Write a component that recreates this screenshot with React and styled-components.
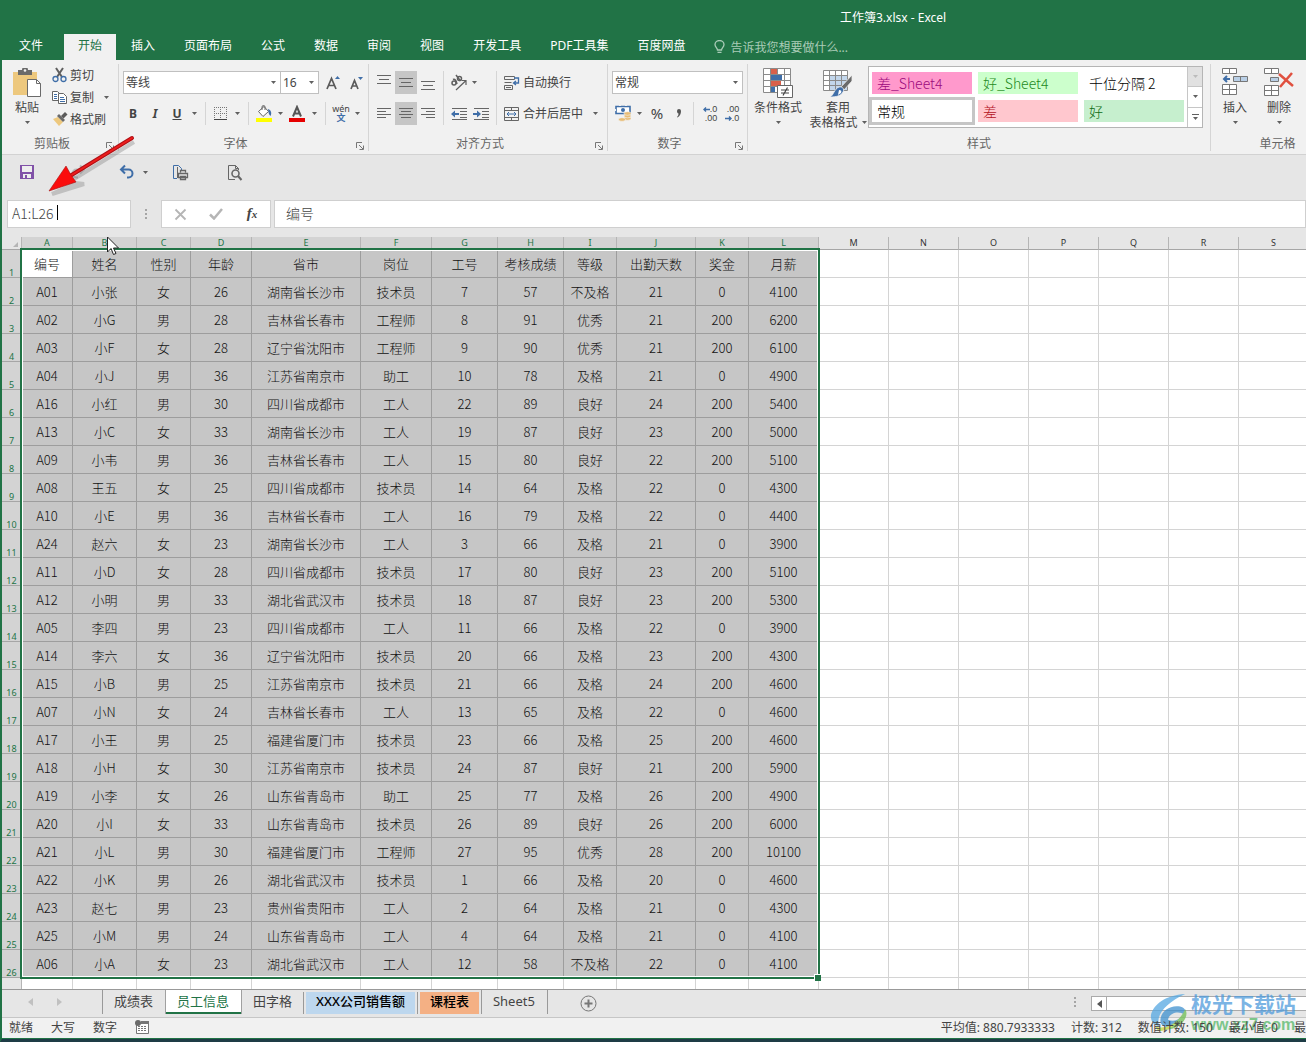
import React, { useState } from 'react';
import styled, { createGlobalStyle, css } from 'styled-components';

const TABS = [
  '文件',
  '开始',
  '插入',
  '页面布局',
  '公式',
  '数据',
  '审阅',
  '视图',
  '开发工具',
  'PDF工具集',
  '百度网盘',
];

const COLUMNS = [
  ['A', 51],
  ['B', 64],
  ['C', 54],
  ['D', 61],
  ['E', 109],
  ['F', 71],
  ['G', 66],
  ['H', 66],
  ['I', 53],
  ['J', 79],
  ['K', 53],
  ['L', 70],
  ...'MNOPQRS'.split('').map(letter => [letter, 70]),
];

const ROWS = `编号,姓名,性别,年龄,省市,岗位,工号,考核成绩,等级,出勤天数,奖金,月薪
A01,小张,女,26,湖南省长沙市,技术员,7,57,不及格,21,0,4100
A02,小G,男,28,吉林省长春市,工程师,8,91,优秀,21,200,6200
A03,小F,女,28,辽宁省沈阳市,工程师,9,90,优秀,21,200,6100
A04,小J,男,36,江苏省南京市,助工,10,78,及格,21,0,4900
A16,小红,男,30,四川省成都市,工人,22,89,良好,24,200,5400
A13,小C,女,33,湖南省长沙市,工人,19,87,良好,23,200,5000
A09,小韦,男,36,吉林省长春市,工人,15,80,良好,22,200,5100
A08,王五,女,25,四川省成都市,技术员,14,64,及格,22,0,4300
A10,小E,男,36,吉林省长春市,工人,16,79,及格,22,0,4400
A24,赵六,女,23,湖南省长沙市,工人,3,66,及格,21,0,3900
A11,小D,女,28,四川省成都市,技术员,17,80,良好,23,200,5100
A12,小明,男,33,湖北省武汉市,技术员,18,87,良好,23,200,5300
A05,李四,男,23,四川省成都市,工人,11,66,及格,22,0,3900
A14,李六,女,36,辽宁省沈阳市,技术员,20,66,及格,23,200,4300
A15,小B,男,25,江苏省南京市,技术员,21,66,及格,24,200,4600
A07,小N,女,24,吉林省长春市,工人,13,65,及格,22,0,4600
A17,小王,男,25,福建省厦门市,技术员,23,66,及格,25,200,4600
A18,小H,女,30,江苏省南京市,技术员,24,87,良好,21,200,5900
A19,小李,女,26,山东省青岛市,助工,25,77,及格,26,200,4900
A20,小I,女,33,山东省青岛市,技术员,26,89,良好,26,200,6000
A21,小L,男,30,福建省厦门市,工程师,27,95,优秀,28,200,10100
A22,小K,男,26,湖北省武汉市,技术员,1,66,及格,20,0,4600
A23,赵七,男,23,贵州省贵阳市,工人,2,64,及格,21,0,4300
A25,小M,男,24,山东省青岛市,工人,4,64,及格,21,0,4100
A06,小A,女,23,湖北省武汉市,工人,12,58,不及格,22,0,4100`
  .split('\n')
  .map(line => line.split(','));

const SELECTED_COLS = 12;
const SELECTED_ROWS = ROWS.length;
const ROW_HEAD = 20;
const COL_HEAD = 13;
const ROW_HEIGHT = 28;
const TABLE_WIDTH = COLUMNS.reduce((sum, col) => sum + col[1], ROW_HEAD);
const SELECTION_WIDTH = COLUMNS.slice(0, SELECTED_COLS).reduce(
  (sum, col) => sum + col[1],
  0
);

/* ---------- icons ---------- */

const Caret = ({ faint }) => (
  <svg width="5" height="3" viewBox="0 0 5 3" fill={faint ? '#bbb' : '#606060'}>
    <path d="M0 0h5L2.5 3z" />
  </svg>
);

const PasteIcon = () => (
  <svg width="30" height="30" viewBox="0 0 30 30">
    <path d="M1 4h24v23H1z" fill="#edc87e" />
    <path d="M6 2h4a3 3 0 0 1 6 0h4v5H6z" fill="#6a6a6a" />
    <circle cx="13" cy="2.5" r="1.3" fill="#f1f1f1" />
    <path d="M15.5 11.5h9l4 4v13h-13z" fill="#fff" stroke="#6a6a6a" />
    <path d="M24.500 11.500v4h4" fill="none" stroke="#6a6a6a" />
  </svg>
);

const CutIcon = () => (
  <svg width="16" height="16" viewBox="0 0 16 16" fill="none">
    <path d="M4 1l6 9M11 1L5 10" stroke="#5f5f5f" strokeWidth="2" />
    <circle cx="3.500" cy="12" r="2.500" stroke="#3f6ea8" strokeWidth="1.300" />
    <circle cx="11.500" cy="12" r="2.500" stroke="#3f6ea8" strokeWidth="1.300" />
  </svg>
);

const CopyIcon = () => (
  <svg width="16" height="16" viewBox="0 0 16 16" fill="#fff" stroke="#666">
    <path d="M.5 2.500h5l2 2v7h-7z" />
    <path d="M6.500 4.500h5l3 3v7h-8z" />
    <path d="M2 5.500h3M2 7.500h3M2 9.500h3M8 8.500h4M8 10.500h5M8 12.500h5" stroke="#3f6ea8" />
  </svg>
);

const BrushIcon = () => (
  <svg width="16" height="16" viewBox="0 0 16 16">
    <path d="M1 8l5-2 5 5-4 4z" fill="#edc87e" />
    <path d="M5 5l2-2 6 6-2 2z" fill="#6a6a6a" />
    <path d="M9 5l4-4 2.500 2.500-4 4z" fill="#5b5b5b" />
  </svg>
);

const LauncherIcon = () => (
  <svg width="8" height="8" viewBox="0 0 8 8" fill="none" stroke="#777">
    <path d="M.5 6V.5H6M3 3l4 4M7.500 3.500v4h-4" />
  </svg>
);

const FontSizeIcon = ({ down }) => (
  <svg width="15" height="18" viewBox="0 0 15 18" fill="none">
    <path
      d={down ? 'M2 15L5.500 6.500 9 15M3.500 12h4.500' : 'M1 15L5.500 4.500 10 15M2.500 11.500h6'}
      stroke="#5a5a5a"
      strokeWidth="1.700"
    />
    <path d={down ? 'M9 3h5l-2.500 3z' : 'M9 5h5l-2.500-3z'} fill="#3f6ea8" />
  </svg>
);

const BordersIcon = () => (
  <svg width="14" height="14" viewBox="0 0 14 14" fill="none" stroke="#777">
    <path d="M0 .5h14M0 6.500h14M.5 0v13M6.500 0v13M12.500 0v13" strokeDasharray="1 1" />
    <path d="M0 12.500h13" stroke="#444" />
  </svg>
);

const FillIcon = () => (
  <svg width="17" height="17" viewBox="0 0 17 17">
    <path d="M2.500 6.500L8 1.500l4.500 5-5.500 5z" fill="#fff" stroke="#666" />
    <path d="M6 5V2a1.500 1.500 0 0 1 3 0v3" fill="none" stroke="#666" />
    <path d="M12 4c3 1 4 4 2.500 7-1.500-1-2-3-2.500-7z" fill="#3f6ea8" />
    <path d="M0 13h16v4H0z" fill="#ffff00" />
  </svg>
);

const FontColorIcon = () => (
  <svg width="16" height="17" viewBox="0 0 16 17">
    <path d="M4 11.500L8 2l4 9.500M5.500 8.500h5" fill="none" stroke="#555" strokeWidth="2" />
    <path d="M0 13h16v4H0z" fill="#e60000" />
  </svg>
);

const LINE_SETS = {
  top: [[0, 14, 0], [2, 12, 4], [0, 14, 8]],
  middle: [[0, 14, 3], [2, 12, 7], [0, 14, 11]],
  bottom: [[0, 14, 6], [2, 12, 10], [0, 14, 14]],
  left: [[0, 14, 2], [0, 9, 5], [0, 14, 8], [0, 9, 11]],
  center: [[0, 14, 2], [2, 12, 5], [0, 14, 8], [2, 12, 11]],
  right: [[0, 14, 2], [5, 14, 5], [0, 14, 8], [5, 14, 11]],
};

const LinesIcon = ({ type }) => (
  <svg width="14" height="15" viewBox="0 0 14 15">
    {LINE_SETS[type].map(([from, to, y]) => (
      <rect key={y} x={from} y={y} width={to - from} height="1" fill="#666" />
    ))}
  </svg>
);

const OrientationIcon = () => (
  <svg width="18" height="18" viewBox="0 0 18 18" fill="none" stroke="#5f5f5f">
    <circle cx="4" cy="9" r="2" strokeWidth="1.500" />
    <path d="M3 5.500c2-1 3 1 4 4.500M6 1l4.500 6" strokeWidth="1.500" />
    <circle cx="9.500" cy="4.500" r="2" strokeWidth="1.500" />
    <path d="M6 16l9.500-9M11.500 6.500h4.500V11" strokeWidth="1.200" />
  </svg>
);

const IndentIcon = ({ right }) => (
  <svg width="17" height="14" viewBox="0 0 17 14">
    <path d="M1 1.500h15M9 4.500h7M9 7.500h7M9 10.500h7M1 12.500h15" stroke="#666" fill="none" />
    <path
      d={right ? 'M0 6h4V3.500L8 7l-4 3.500V8H0z' : 'M8 6H4V3.500L0 7l4 3.500V8h4z'}
      fill="#3f6ea8"
    />
  </svg>
);

const WrapIcon = () => (
  <svg width="16" height="16" viewBox="0 0 16 16" fill="none" stroke="#666">
    <path d="M.5 1.500h10v3H.5zM.5 7.500h7M.5 10.500h8v4h-8zM2 12.500h5" />
    <path d="M10 3h4.500v5H10M12 6l-2.500 2 2.500 2" stroke="#3f6ea8" strokeWidth="1.300" />
  </svg>
);

const MergeIcon = () => (
  <svg width="16" height="16" viewBox="0 0 16 16" fill="none" stroke="#666">
    <path d="M.5 1.500h14v13H.5zM.5 4.500h14M.5 11.500h14M7.500 1v3M7.500 12v3" />
    <path d="M3 8h9M5 6L3 8l2 2M10 6l2 2-2 2" stroke="#3f6ea8" />
  </svg>
);

const CurrencyIcon = () => (
  <svg width="17" height="17" viewBox="0 0 17 17">
    <path d="M1 1.500h14v7H1z" fill="#fff" stroke="#3f6ea8" strokeWidth="1.600" />
    <path d="M4 .5h2M10 .5h2M.5 4v2" stroke="#f1f1f1" strokeWidth="1" />
    <circle cx="8" cy="5" r="2" fill="#3f6ea8" />
    <g fill="#e9bd76" stroke="#f1f1f1" strokeWidth=".6">
      <ellipse cx="12.500" cy="13.500" rx="3.500" ry="1.800" />
      <ellipse cx="12.500" cy="11" rx="3.500" ry="1.800" />
      <ellipse cx="12.500" cy="8.500" rx="3.500" ry="1.800" />
      <ellipse cx="7" cy="14.500" rx="3.500" ry="1.800" />
    </g>
  </svg>
);

const CommaIcon = () => (
  <svg width="6" height="9" viewBox="0 0 6 9" fill="#555">
    <path d="M1 2a2 2 0 0 1 4 0c0 3-1 5-3.500 6.500L1 8c1-1 1.500-2 1.500-3.500C1.500 4.500 1 3 1 2z" />
  </svg>
);

const DecimalArrow = ({ right }) => (
  <svg width="7" height="5" viewBox="0 0 7 5" fill="none" stroke="#3f6ea8" strokeWidth="1.400">
    <path d={right ? 'M0 2.500h6M4 .5l2 2-2 2' : 'M7 2.500H1M3 .5l-2 2 2 2'} />
  </svg>
);

const ConditionalIcon = () => (
  <svg width="30" height="30" viewBox="0 0 30 30">
    <path
      d="M.5.5h27v24H.5zM7.500.5v24M14.500.5v24M21.500.5v24M.5 6.500h27M.5 12.500h27M.5 18.500h27"
      fill="#fff"
      stroke="#8a8a8a"
    />
    <path d="M8 1h6v5H8zM8 13h10v5H8z" fill="#d9604a" />
    <path d="M8 7h11v5H8zM8 19h4v5H8z" fill="#3f6ea8" />
    <path d="M14.500 17.500h15v12h-15z" fill="#fff" stroke="#666" />
    <path d="M18 22h8M18 25h8M24.500 19.500l-4.500 8" stroke="#444" fill="none" strokeWidth="1.200" />
  </svg>
);

const FormatTableIcon = () => (
  <svg width="30" height="30" viewBox="0 0 30 30">
    <path d="M.5 2.500h24v20H.5z" fill="#fff" />
    <path d="M7 8h18v14H7z" fill="#c3d7ec" />
    <path
      d="M.5 2.500h24v20H.5zM6.500 2.500v20M12.500 2.500v20M18.500 2.500v20M.5 7.500h24M.5 12.500h24M.5 17.500h24"
      fill="none"
      stroke="#8a8a8a"
    />
    <path d="M29 7v6l-8 9-3-3z" fill="#6a6a6a" stroke="#f1f1f1" strokeWidth=".8" />
    <path
      d="M16 19c3-1 6 2 4 5-2 4-7 5-13 5 4-2 4-8 9-10z"
      fill="#3f6ea8"
      stroke="#f1f1f1"
      strokeWidth=".8"
    />
    <path d="M16 22c2 0 3 1 2 3l-3 2z" fill="#fff" />
  </svg>
);

const InsertCellsIcon = () => (
  <svg width="26" height="30" viewBox="0 0 26 30" fill="#fff" stroke="#777">
    <path d="M.5.5h14v5H.5zM7.500.5v5M.5 16.500h14v10H.5zM7.500 16.500v10M.5 21.500h14" />
    <path d="M11.500 8.500h14v5h-14zM18.500 8.500v5" fill="#b9cfe6" />
    <path d="M8 11H3M5 8l-3 3 3 3" fill="none" stroke="#3f6ea8" strokeWidth="2" />
  </svg>
);

const DeleteCellsIcon = () => (
  <svg width="30" height="30" viewBox="0 0 30 30" fill="#fff" stroke="#777">
    <path d="M.5.5h14v5H.5zM7.500.5v5M.5 17.500h14v10H.5zM7.500 17.500v10M.5 22.500h14" />
    <path d="M6.500 9.500h8v4h-8z" fill="#b9cfe6" />
    <path d="M15 6l14 12M28 5L16 19" stroke="#e0503f" strokeWidth="2.500" />
  </svg>
);

const BulbIcon = () => (
  <svg width="11" height="14" viewBox="0 0 11 14" fill="none" stroke="#a9cbb7" strokeWidth="1.300">
    <path d="M3.500 10c0-2-2.500-3-2.500-5.500a4.500 4 0 0 1 9 0C10 7 7.500 8 7.500 10zM3.500 12.300h4" />
  </svg>
);

const SaveIcon = () => (
  <svg width="16" height="16" viewBox="0 0 16 16">
    <path d="M1 1h14v14H1z" fill="#8152a8" />
    <path d="M3 2h10v6H3zM4 10h8v4H4z" fill="#eee" />
    <path d="M6 11h2v3H6z" fill="#8152a8" />
  </svg>
);

const UndoIcon = ({ faint }) => (
  <svg
    width="16"
    height="16"
    viewBox="0 0 16 16"
    fill="none"
    stroke={faint ? '#b9b9b9' : '#3f6ea8'}
    strokeWidth="2"
  >
    {faint ? (
      <path d="M10 1.500l4 4-4 4M14 5.500H6.500a4 4 0 0 0 0 8H8" />
    ) : (
      <path d="M6 1.500L2 5.500l4 4M2 5.500h7.500a4 4 0 0 1 0 8H8" />
    )}
  </svg>
);

const PrintIcon = () => (
  <svg width="17" height="17" viewBox="0 0 17 17" fill="none" stroke="#666">
    <path d="M5 14.500H1.500v-13h5l3 3V6" stroke="#3f6ea8" />
    <path d="M5.500 3v11" />
    <path d="M8.500 8.500v-2h5v2M6.500 9.500h9v4h-9zM8.500 12.500h5v3h-5z" fill="#e6e6e6" strokeWidth="1.300" />
  </svg>
);

const PreviewIcon = () => (
  <svg width="17" height="17" viewBox="0 0 17 17" fill="none" stroke="#666">
    <path d="M9 15.500H2.500v-14h7l3 3V6M9.500 1.500v3h3" />
    <circle cx="9.500" cy="9.500" r="3.500" strokeWidth="1.600" />
    <path d="M12 12l3.500 4" strokeWidth="2" />
  </svg>
);

const CancelIcon = () => (
  <svg width="13" height="13" viewBox="0 0 13 13" fill="none" stroke="#b5b5b5" strokeWidth="1.800">
    <path d="M1.500 1.500l10 10M11.500 1.500l-10 10" />
  </svg>
);

const CheckIcon = () => (
  <svg width="14" height="12" viewBox="0 0 14 12" fill="none" stroke="#b5b5b5" strokeWidth="2.500">
    <path d="M1 6.500l4 4L13 1" />
  </svg>
);

const DotsIcon = () => (
  <svg width="3" height="12" viewBox="0 0 3 12" fill="#a5a5a5">
    <path d="M0 1h2v2H0zM0 5h2v2H0zM0 9h2v2H0z" />
  </svg>
);

const SideArrow = ({ right, dark }) => (
  <svg width="5" height="8" viewBox="0 0 5 8" fill={dark ? '#555' : '#c0c0c0'}>
    <path d={right ? 'M0 0l5 4-5 4z' : 'M5 0L0 4l5 4z'} />
  </svg>
);

const PlusIcon = () => (
  <svg width="17" height="17" viewBox="0 0 17 17" fill="none" stroke="#777">
    <circle cx="8.500" cy="8.500" r="7.500" />
    <path d="M8.500 4.500v8M4.500 8.500h8" strokeWidth="2" />
  </svg>
);

const MacroIcon = () => (
  <svg width="14" height="14" viewBox="0 0 14 14">
    <path d="M1.500 5v8.500h12V3" fill="#fff" stroke="#777" />
    <path d="M6 1h8v3H6z" fill="#777" />
    <path d="M3 6.500h9M3 8.500h9M3 10.500h9" stroke="#777" strokeDasharray="2 1" />
    <circle cx="3" cy="3" r="3" fill="#6a6a6a" />
  </svg>
);

/* ---------- app ---------- */

const Launcher = () => (
  <LauncherButton aria-label="更多设置">
    <LauncherIcon />
  </LauncherButton>
);

const RibbonGroup = ({ width, label, launcher, children }) => (
  <Group $width={width}>
    <GroupBody>{children}</GroupBody>
    <GroupFooter>
      <GroupName>{label}</GroupName>
      {launcher && <Launcher />}
    </GroupFooter>
  </Group>
);

const DropButton = ({ width = 12, label = '展开' }) => (
  <Tool $width={width} aria-label={label}>
    <Caret />
  </Tool>
);

const Combo = ({ label, value, width }) => (
  <ComboBox $width={width}>
    <ComboSelect aria-label={label} defaultValue={value}>
      <option>{value}</option>
    </ComboSelect>
    <ComboArrow>
      <Caret />
    </ComboArrow>
  </ComboBox>
);

const Ribbon = () => (
  <RibbonBar>
    <RibbonGroup width={117} label="剪贴板" launcher>
      <BigTool $width={50}>
        <PasteIcon />
        <span>粘贴</span>
        <BigLine>
          <Caret />
        </BigLine>
      </BigTool>
      <SmallStack>
        <SmallTool>
          <CutIcon />
          剪切
        </SmallTool>
        <SmallTool>
          <CopyIcon />
          复制
          <TrailingCaret>
            <Caret />
          </TrailingCaret>
        </SmallTool>
        <SmallTool>
          <BrushIcon />
          格式刷
        </SmallTool>
      </SmallStack>
    </RibbonGroup>

    <RibbonGroup width={250} label="字体" launcher>
      <Rows $left={3}>
        <ToolRow $left={1}>
          <Combo label="字体" value="等线" width={158} />
          <Combo label="字号" value="16" width={39} />
          <Tool $width={28} aria-label="增大字号">
            <FontSizeIcon />
          </Tool>
          <Tool $width={18} aria-label="减小字号">
            <FontSizeIcon down />
          </Tool>
        </ToolRow>
        <ToolRow>
          <Tool $width={22} $bold>
            B
          </Tool>
          <Tool $width={22} $bold $italic>
            I
          </Tool>
          <Tool $width={22} $bold>
            <u>U</u>
          </Tool>
          <DropButton />
          <Divider $gap={5} />
          <Tool $width={20} aria-label="边框">
            <BordersIcon />
          </Tool>
          <DropButton />
          <Divider $gap={5} />
          <Tool $width={20} aria-label="填充颜色">
            <FillIcon />
          </Tool>
          <DropButton />
          <Tool $width={22} aria-label="字体颜色">
            <FontColorIcon />
          </Tool>
          <DropButton />
          <Divider $gap={5} />
          <Tool $width={20}>
            <Phonetic>
              wén<b>文</b>
            </Phonetic>
          </Tool>
          <DropButton />
        </ToolRow>
      </Rows>
    </RibbonGroup>

    <RibbonGroup width={239} label="对齐方式" launcher>
      <Rows $left={4}>
        <ToolRow>
          {['top', 'middle', 'bottom'].map(type => (
            <Tool key={type} $width={22} $active={type === 'middle'} aria-label={type}>
              <LinesIcon type={type} />
            </Tool>
          ))}
        </ToolRow>
        <ToolRow>
          {['left', 'center', 'right'].map(type => (
            <Tool key={type} $width={22} $active={type === 'center'} aria-label={type}>
              <LinesIcon type={type} />
            </Tool>
          ))}
        </ToolRow>
      </Rows>
      <TallDivider />
      <Rows>
        <ToolRow>
          <Tool $width={22} aria-label="方向">
            <OrientationIcon />
          </Tool>
          <DropButton width={8} />
        </ToolRow>
        <ToolRow>
          <Tool $width={22} aria-label="减少缩进量">
            <IndentIcon />
          </Tool>
          <Tool $width={22} aria-label="增加缩进量">
            <IndentIcon right />
          </Tool>
        </ToolRow>
      </Rows>
      <TallDivider />
      <Rows $left={3}>
        <TextTool>
          <WrapIcon />
          自动换行
        </TextTool>
        <ToolRow>
          <TextTool>
            <MergeIcon />
            合并后居中
          </TextTool>
          <DropButton width={24} />
        </ToolRow>
      </Rows>
    </RibbonGroup>

    <RibbonGroup width={140} label="数字" launcher>
      <Rows $left={4}>
        <Combo label="数字格式" value="常规" width={131} />
        <ToolRow>
          <Tool $width={22} aria-label="会计数字格式">
            <CurrencyIcon />
          </Tool>
          <DropButton width={10} />
          <Tool $width={26} $size={15}>
            %
          </Tool>
          <Tool $width={18} aria-label="千位分隔样式">
            <CommaIcon />
          </Tool>
          <Divider $gap={5} />
          <Tool $width={22}>
            <Decimal>
              <span>
                <DecimalArrow />
                .0
              </span>
              <span>.00</span>
            </Decimal>
          </Tool>
          <Tool $width={22}>
            <Decimal>
              <span>.00</span>
              <span>
                <DecimalArrow right />
                .0
              </span>
            </Decimal>
          </Tool>
        </ToolRow>
      </Rows>
    </RibbonGroup>

    <RibbonGroup width={463} label="样式">
      <BigTool $width={60}>
        <ConditionalIcon />
        <span>条件格式</span>
        <BigLine>
          <Caret />
        </BigLine>
      </BigTool>
      <BigTool $width={60}>
        <FormatTableIcon />
        <span>套用</span>
        <BigLine>
          表格格式
          <Caret />
        </BigLine>
      </BigTool>
      <Gallery>
        <Swatches>
          <Swatch $bg="#ff99cc" $color="#9c0a7c">
            差_Sheet4
          </Swatch>
          <Swatch $bg="#ccffcc" $color="#1d8a1d">
            好_Sheet4
          </Swatch>
          <Swatch $bg="#fff" $color="#000">
            千位分隔 2
          </Swatch>
          <Swatch $bg="#fff" $color="#000" $selected>
            常规
          </Swatch>
          <Swatch $bg="#ffc7ce" $color="#b3121d">
            差
          </Swatch>
          <Swatch $bg="#c6efce" $color="#0d6b14">
            好
          </Swatch>
        </Swatches>
        <GalleryScroll>
          <ScrollStep $off aria-label="上一行">
            <Caret faint />
          </ScrollStep>
          <ScrollStep aria-label="下一行">
            <Caret />
          </ScrollStep>
          <ScrollStep aria-label="其他">
            <MoreMark />
            <Caret />
          </ScrollStep>
        </GalleryScroll>
      </Gallery>
    </RibbonGroup>

    <RibbonGroup width={134} label="单元格">
      <BigTool $width={48}>
        <InsertCellsIcon />
        <span>插入</span>
        <BigLine>
          <Caret />
        </BigLine>
      </BigTool>
      <BigTool $width={40}>
        <DeleteCellsIcon />
        <span>删除</span>
        <BigLine>
          <Caret />
        </BigLine>
      </BigTool>
    </RibbonGroup>
  </RibbonBar>
);

const Grid = () => (
  <GridArea>
    <Sheet>
      <colgroup>
        <col width={ROW_HEAD} />
        {COLUMNS.map(([letter, width]) => (
          <col key={letter} width={width} />
        ))}
        <col />
      </colgroup>
      <thead>
        <tr>
          <Corner>
            <svg width="5" height="5" viewBox="0 0 5 5" fill="#b5b5b5">
              <path d="M5 0v5H0z" />
            </svg>
          </Corner>
          {COLUMNS.map(([letter], i) => (
            <ColHead key={letter} $selected={i < SELECTED_COLS}>
              {letter}
            </ColHead>
          ))}
          <ColHead />
        </tr>
      </thead>
      <tbody>
        {[...ROWS, []].map((row, r) => (
          <tr key={r}>
            <RowHead $selected={r < SELECTED_ROWS}>{r < SELECTED_ROWS ? r + 1 : ''}</RowHead>
            {COLUMNS.map(([letter], c) => (
              <Cell
                key={letter}
                $selected={r < SELECTED_ROWS && c < SELECTED_COLS}
                $active={r === 0 && c === 0}
              >
                {row[c]}
              </Cell>
            ))}
            <Cell />
          </tr>
        ))}
      </tbody>
    </Sheet>
    <Selection />
    <FillHandle />
  </GridArea>
);

const App = () => {
  const [nameBox, setNameBox] = useState('A1:L26');
  const [formula, setFormula] = useState('编号');

  return (
    <>
      <GlobalStyle />
      <Window>
        <TitleBar>工作簿3.xlsx - Excel</TitleBar>
        <TabBar>
          {TABS.map((tab, i) => (
            <RibbonTab key={tab} $file={i === 0} $active={i === 1}>
              {tab}
            </RibbonTab>
          ))}
          <TellMe>
            <BulbIcon />
            告诉我您想要做什么...
          </TellMe>
        </TabBar>
        <Ribbon />

        <QuickBar>
          <QuickTool $width={48} aria-label="保存">
            <SaveIcon />
          </QuickTool>
          <QuickTool $width={54} aria-label="恢复">
            <UndoIcon faint />
          </QuickTool>
          <QuickTool $width={32} $start aria-label="撤消">
            <UndoIcon />
          </QuickTool>
          <DropButton width={16} />
          <QuickTool $width={54} aria-label="打印">
            <PrintIcon />
          </QuickTool>
          <QuickTool $width={54} aria-label="打印预览">
            <PreviewIcon />
          </QuickTool>
        </QuickBar>

        <FormulaBar>
          <NameField>
            <BarInput
              aria-label="名称框"
              value={nameBox}
              onChange={e => setNameBox(e.target.value)}
            />
            <TextCursor />
          </NameField>
          <BarGrip>
            <DotsIcon />
          </BarGrip>
          <FormulaTools>
            <Tool $width={36} aria-label="取消">
              <CancelIcon />
            </Tool>
            <Tool $width={36} aria-label="输入">
              <CheckIcon />
            </Tool>
            <FxButton>
              f<small>x</small>
            </FxButton>
          </FormulaTools>
          <FormulaField>
            <BarInput
              aria-label="编辑栏"
              value={formula}
              onChange={e => setFormula(e.target.value)}
            />
          </FormulaField>
        </FormulaBar>

        <Grid />

        <SheetBar>
          <SheetNav>
            <SideArrow />
            <SideArrow right />
          </SheetNav>
          <SheetTab>成绩表</SheetTab>
          <SheetTab $active>员工信息</SheetTab>
          <SheetTab>田字格</SheetTab>
          <ColorTab $bg="#bdd7ee">XXX公司销售额</ColorTab>
          <ColorTab $bg="#f4b084">课程表</ColorTab>
          <SheetTab>Sheet5</SheetTab>
          <AddSheet aria-label="新工作表">
            <PlusIcon />
          </AddSheet>
          <SheetScroll>
            <DotsIcon />
            <ScrollTrack>
              <ScrollLeft aria-label="向左滚动">
                <SideArrow dark />
              </ScrollLeft>
            </ScrollTrack>
          </SheetScroll>
        </SheetBar>

        <StatusBar>
          <StatusGroup $gap={18}>
            <span>就绪</span>
            <span>大写</span>
            <span>数字</span>
            <MacroIcon />
          </StatusGroup>
          <StatusGroup $gap={16}>
            <span>平均值: 880.7933333</span>
            <span>计数: 312</span>
            <span>数值计数: 150</span>
            <span>最小值: 0</span>
            <span>最</span>
          </StatusGroup>
        </StatusBar>

        <PointerArrow width="104" height="74" viewBox="0 0 104 74">
          <path d="M94 12L34 49M12 64l24-11 8 1z" stroke="#777" strokeWidth="4" opacity=".35" />
          <path d="M92 8L30 46" stroke="#b01015" strokeWidth="4" strokeLinecap="round" />
          <path d="M92 8L30 46" stroke="#ee1c1c" strokeWidth="2" strokeLinecap="round" />
          <path d="M9 61L26 36l5 9 5 7z" fill="#fb0d0d" stroke="#a51212" strokeWidth=".6" />
        </PointerArrow>
        <MouseCursor width="13" height="20" viewBox="0 0 13 20">
          <path
            d="M.5 1v15l3.500-3.500 2.500 6 2.500-1-2.500-5.500h5z"
            fill="#fff"
            stroke="#222"
          />
        </MouseCursor>

        <Watermark>
          <svg width="42" height="40" viewBox="0 0 44 42">
            <path d="M40 1C20 2 6 12 4 24c0 6 3 10 9 11-5-11 7-25 27-34z" fill="#55a8e2" />
            <path
              d="M14 29c0-9 9-16 19-15 7 1 9 5 6 9-5-5-16-2-17 5 6 3 12 0 18-6-2 10-14 17-22 13-3-1-4-3-4-6z"
              fill="#3f91cf"
            />
            <path d="M40 17c5 7-4 20-17 21l-13 2c10-3 24-9 30-23z" fill="#6fbf55" />
            <path d="M8 35c8 3 17 0 23-4-4 6-13 9-19 9z" fill="#c7d638" />
          </svg>
          <WatermarkText>
            <b>极光下载站</b>
            <i>www.xz7.com</i>
          </WatermarkText>
        </Watermark>
      </Window>
    </>
  );
};

/* ---------- styles ---------- */

const GlobalStyle = createGlobalStyle`
  * {
    box-sizing: border-box;
  }

  body {
    margin: 0;
    overflow: hidden;
    color: #444;
    font-family: 'Noto Sans', 'Noto Sans CJK SC', sans-serif;
    font-size: 12px;
    line-height: 15px;
  }

  button,
  input,
  select {
    margin: 0;
    padding: 0;
    border: 0;
    border-radius: 0;
    background: none;
    color: inherit;
    font: inherit;
    outline: none;
  }

  svg {
    flex: none;
    display: block;
  }
`;

const Window = styled.div`
  position: relative;
  display: flex;
  flex-direction: column;
  height: 100vh;
  overflow: hidden;
  border-left: 2px solid #217346;
  border-bottom: 3px solid #1e3c46;
  background: #e6e6e6;
`;

const TitleBar = styled.header`
  flex: none;
  height: 34px;
  padding-left: 838px;
  background: #217346;
  color: #fff;
  line-height: 35px;
  white-space: nowrap;
`;

const TabBar = styled.nav`
  flex: none;
  display: flex;
  gap: 1px;
  height: 26px;
  padding-left: 3px;
  background: #217346;
  white-space: nowrap;
`;

const RibbonTab = styled.button`
  margin-right: ${({ $file }) => ($file ? 6 : 0)}px;
  padding: 0 14px 3px;
  background: ${({ $active }) => ($active ? '#f1f1f1' : 'transparent')};
  color: ${({ $active }) => ($active ? '#217346' : '#fff')};
`;

const TellMe = styled.button`
  display: flex;
  align-items: center;
  gap: 5px;
  padding-left: 14px;
  color: #a9cbb7;
`;

const RibbonBar = styled.section`
  flex: none;
  display: flex;
  height: 95px;
  padding: 4px 0 3px;
  overflow: hidden;
  border-bottom: 1px solid #d2d2d2;
  background: #f1f1f1;
  white-space: nowrap;
`;

const Group = styled.div`
  flex: none;
  display: flex;
  flex-direction: column;
  width: ${({ $width }) => $width}px;
  border-right: 1px solid #d5d5d5;
`;

const GroupBody = styled.div`
  flex: 1;
  display: flex;
  align-items: flex-start;
`;

const GroupFooter = styled.div`
  display: flex;
  align-items: flex-end;
  height: 15px;
  color: #666;
`;

const GroupName = styled.div`
  flex: 1;
  text-align: center;
`;

const LauncherButton = styled.button`
  display: flex;
  align-items: flex-end;
  width: 16px;
  height: 15px;
  padding: 0 0 1px 4px;
`;

const Rows = styled.div`
  display: flex;
  flex-direction: column;
  gap: 8px;
  padding: 7px 0 0 ${({ $left = 0 }) => $left}px;
`;

const ToolRow = styled.div`
  display: flex;
  align-items: center;
  height: 23px;
  padding-left: ${({ $left = 0 }) => $left}px;
`;

const Tool = styled.button`
  flex: none;
  display: flex;
  align-items: center;
  justify-content: center;
  width: ${({ $width }) => $width}px;
  height: 23px;
  background: ${({ $active }) => ($active ? '#c6c6c6' : 'transparent')};
  font-size: ${({ $size = 12 }) => $size}px;
  font-weight: ${({ $bold }) => ($bold ? 700 : 400)};
  font-style: ${({ $italic }) => ($italic ? 'italic' : 'normal')};
`;

const TextTool = styled.button`
  display: flex;
  align-items: center;
  gap: 3px;
  height: 23px;
`;

const Divider = styled.div`
  width: 1px;
  height: 23px;
  margin: 0 ${({ $gap }) => $gap}px;
  background: #d5d5d5;
`;

const TallDivider = styled.div`
  width: 1px;
  height: 54px;
  margin: 7px 4px 0;
  background: #d5d5d5;
`;

const Phonetic = styled.span`
  display: flex;
  flex-direction: column;
  align-items: center;
  font-size: 9px;
  line-height: 8px;

  b {
    color: #3f6ea8;
    font-size: 9px;
    line-height: 9px;
  }
`;

const Decimal = styled.span`
  display: flex;
  flex-direction: column;
  align-items: flex-end;
  font-family: 'Liberation Sans', sans-serif;
  font-size: 9px;
  line-height: 9px;

  span {
    display: flex;
    align-items: center;
  }
`;

const ComboBox = styled.div`
  position: relative;
  width: ${({ $width }) => $width}px;
  height: 23px;

  & + & {
    margin-left: -1px;
  }
`;

const ComboSelect = styled.select`
  appearance: none;
  width: 100%;
  height: 100%;
  padding: 0 2px;
  border: 1px solid #c0c0c0;
  background: #fff;
`;

const ComboArrow = styled.span`
  position: absolute;
  top: 10px;
  right: 5px;
  pointer-events: none;
`;

const BigTool = styled.button`
  flex: none;
  display: flex;
  flex-direction: column;
  align-items: center;
  width: ${({ $width }) => $width}px;
  padding-top: 4px;

  & > span:nth-child(2) {
    margin-top: 2px;
  }
`;

const BigLine = styled.span`
  display: flex;
  align-items: center;
  gap: 4px;
  height: 15px;
`;

const SmallStack = styled.div`
  flex: 1;
`;

const SmallTool = styled.button`
  display: flex;
  align-items: center;
  gap: 2px;
  width: 100%;
  height: 22px;
`;

const TrailingCaret = styled.span`
  margin-left: auto;
  padding-right: 9px;
`;

const Gallery = styled.div`
  display: flex;
  width: 335px;
  height: 62px;
  margin-top: 2px;
  border: 1px solid #b5b5b5;
  background: #fff;
`;

const Swatches = styled.div`
  flex: 1;
  display: grid;
  grid-template-columns: repeat(3, 100px);
  grid-auto-rows: 22px;
  gap: 6px;
  padding: 5px 3px;
`;

const Swatch = styled.button`
  padding: 0 5px;
  background: ${({ $bg }) => $bg};
  color: ${({ $color }) => $color};
  font-family: 'Noto Sans CJK SC', sans-serif;
  font-size: 14px;
  font-weight: 300;
  line-height: 22px;
  text-align: left;
  ${({ $selected }) =>
    $selected &&
    css`
      outline: 3px solid #c6c6c6;
    `}
`;

const GalleryScroll = styled.div`
  display: flex;
  flex-direction: column;
  width: 15px;
  border-left: 1px solid #c6c6c6;
`;

const ScrollStep = styled.button`
  flex: 1;
  display: flex;
  flex-direction: column;
  align-items: center;
  justify-content: center;
  gap: 2px;
  background: ${({ $off }) => ($off ? '#e1e1e1' : '#fff')};

  & + & {
    border-top: 1px solid #c6c6c6;
  }
`;

const MoreMark = styled.span`
  width: 7px;
  height: 1px;
  background: #606060;
`;

const QuickBar = styled.div`
  flex: none;
  display: flex;
  align-items: center;
  height: 45px;
  padding: 0 0 11px 1px;
`;

const QuickTool = styled(Tool)`
  justify-content: ${({ $start }) => ($start ? 'flex-start' : 'center')};
  height: 34px;
  padding-left: ${({ $start }) => ($start ? 14 : 0)}px;
`;

const FormulaBar = styled.div`
  flex: none;
  display: flex;
  height: 28px;
  margin-bottom: 9px;
  padding-left: 5px;
`;

const barBox = css`
  display: flex;
  align-items: center;
  border: 1px solid #cfcfcf;
  background: #fff;
`;

const NameField = styled.div`
  ${barBox}
  position: relative;
  width: 124px;
  padding: 0 4px 3px;
`;

const BarInput = styled.input`
  width: 100%;
  height: 100%;
  font-family: 'Noto Sans CJK SC', sans-serif;
  font-size: 14px;
  font-weight: 300;
`;

const TextCursor = styled.span`
  position: absolute;
  top: 4px;
  left: 49px;
  width: 1px;
  height: 15px;
  background: #000;
`;

const BarGrip = styled.div`
  display: flex;
  align-items: center;
  justify-content: center;
  width: 30px;
`;

const FormulaTools = styled.div`
  ${barBox}
  width: 110px;
  margin-right: 3px;
`;

const FxButton = styled.button`
  flex: 1;
  font-family: 'Liberation Serif', serif;
  font-size: 15px;
  font-style: italic;
  font-weight: 700;

  small {
    font-size: 11px;
  }
`;

const FormulaField = styled.div`
  ${barBox}
  flex: 1;
  padding: 0 11px 2px;
`;

const GridArea = styled.main`
  position: relative;
  flex: 1;
  min-height: 0;
  overflow: hidden;
  background: #fff;
`;

const Sheet = styled.table`
  width: 100%;
  min-width: ${TABLE_WIDTH}px;
  table-layout: fixed;
  border-collapse: separate;
  border-spacing: 0;
`;

const headCell = css`
  padding: 0;
  border-right: 1px solid #b5b5b5;
  border-bottom: 1px solid #a6a6a6;
  font-size: 9px;
  font-weight: 400;
  line-height: 12px;
`;

const ColHead = styled.th`
  ${headCell}
  height: ${COL_HEAD}px;
  background: ${({ $selected }) => ($selected ? '#d3d3d3' : '#e6e6e6')};
  color: ${({ $selected }) => ($selected ? '#217346' : '#333')};
`;

const Corner = styled.th`
  ${headCell}
  background: #e6e6e6;

  svg {
    margin: 3px 3px 0 auto;
  }
`;

const RowHead = styled.th`
  ${headCell}
  height: ${ROW_HEIGHT}px;
  background: ${({ $selected }) => ($selected ? '#d3d3d3' : '#e6e6e6')};
  color: #217346;
  line-height: 9px;
  text-align: center;
  vertical-align: bottom;
`;

const Cell = styled.td`
  height: ${ROW_HEIGHT}px;
  padding: 0;
  border-right: 1px solid ${({ $selected }) => ($selected ? '#9d9d9d' : '#d4d4d4')};
  border-bottom: 1px solid ${({ $selected }) => ($selected ? '#9d9d9d' : '#d4d4d4')};
  background: ${({ $selected, $active }) => ($selected && !$active ? '#c6c6c6' : '#fff')};
  color: #111;
  font-family: 'Noto Sans CJK SC', sans-serif;
  font-size: 13px;
  font-weight: 300;
  line-height: 18px;
  text-align: center;
  white-space: nowrap;
`;

const Selection = styled.div`
  position: absolute;
  top: ${COL_HEAD - 2}px;
  left: ${ROW_HEAD - 2}px;
  width: ${SELECTION_WIDTH + 3}px;
  height: ${SELECTED_ROWS * ROW_HEIGHT + 3}px;
  border: 2px solid #217346;
  box-shadow: inset 0 0 0 1px #fff;
  pointer-events: none;
`;

const FillHandle = styled.div`
  position: absolute;
  top: ${COL_HEAD + SELECTED_ROWS * ROW_HEIGHT - 4}px;
  left: ${ROW_HEAD + SELECTION_WIDTH - 5}px;
  width: 7px;
  height: 7px;
  border: solid #fff;
  border-width: 1px 0 0 1px;
  background: #217346;
`;

const SheetBar = styled.nav`
  flex: none;
  display: flex;
  height: 28px;
  padding-bottom: 3px;
  border-top: 1px solid #999;
  font-size: 13px;
  white-space: nowrap;
`;

const SheetNav = styled.div`
  display: flex;
  align-items: center;
  gap: 24px;
  width: 101px;
  padding-left: 26px;
  border-right: 1px solid #999;
`;

const SheetTab = styled.button`
  padding: 0 12px 2px 11px;
  color: ${({ $active }) => ($active ? '#217346' : '#444')};
  ${({ $active }) =>
    $active &&
    css`
      border: solid #a0a0a0;
      border-width: 0 1px;
      background: #fff;
      box-shadow: inset 0 -2px #217346;
    `}
`;

const ColorTab = styled.button`
  margin: 2px 0 0;
  padding: 0 10px 4px;
  border: solid #e6e6e6;
  border-width: 0 2px;
  background: ${({ $bg }) => $bg};
  box-shadow: -1px 0 #999;
  color: #000;
  font-weight: 500;

  & + & {
    margin-left: 1px;
  }

  & + ${SheetTab} {
    border: solid #999;
    border-width: 0 1px;
  }
`;

const AddSheet = styled.button`
  display: flex;
  align-items: center;
  padding: 3px 32px 0;
`;

const SheetScroll = styled.div`
  flex: none;
  display: flex;
  align-items: center;
  gap: 14px;
  margin-left: auto;
`;

const ScrollTrack = styled.div`
  width: 215px;
  height: 15px;
  margin-top: 3px;
  border: 1px solid #aaa;
  border-right: 0;
  background: #fff;
`;

const ScrollLeft = styled.button`
  display: flex;
  align-items: center;
  justify-content: center;
  width: 15px;
  height: 13px;
  border-right: 1px solid #aaa;
`;

const StatusBar = styled.footer`
  flex: none;
  display: flex;
  justify-content: space-between;
  height: 22px;
  padding: 0 0 2px 7px;
  border-top: 1px solid #c6c6c6;
  border-bottom: 1px solid #217346;
  background: #f1f1f1;
  white-space: nowrap;
`;

const StatusGroup = styled.div`
  position: relative;
  z-index: 1;
  display: flex;
  align-items: center;
  gap: ${({ $gap }) => $gap}px;
`;

const PointerArrow = styled.svg`
  position: absolute;
  top: 130px;
  left: 38px;
  fill: none;
`;

const MouseCursor = styled.svg`
  position: absolute;
  top: 236px;
  left: 105px;
`;

const Watermark = styled.div`
  position: absolute;
  right: 10px;
  bottom: 5px;
  display: flex;
  align-items: center;
  gap: 2px;
  opacity: 0.75;
  pointer-events: none;
`;

const WatermarkText = styled.div`
  display: flex;
  flex-direction: column;

  b {
    color: #4f9bdc;
    font-size: 21px;
    line-height: 24px;
  }

  i {
    color: #55b868;
    font-family: 'Liberation Sans', sans-serif;
    font-size: 16px;
    font-style: normal;
    font-weight: 700;
    line-height: 18px;
  }
`;

export default App;
